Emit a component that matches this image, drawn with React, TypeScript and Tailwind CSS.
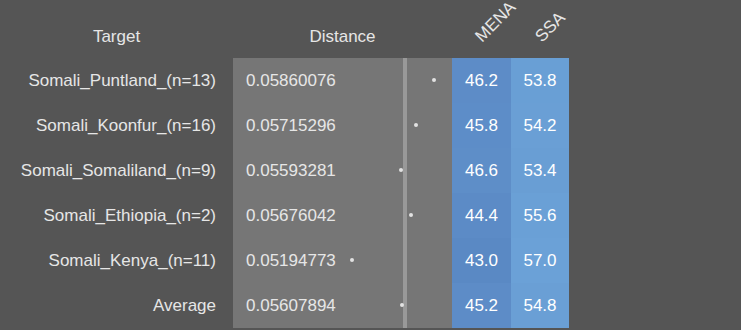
import React from "react";

const rows = [
  { name: "Somali_Puntland_(n=13)", dist: "0.05860076", dot: 434, mena: "46.2", ssa: "53.8", mc: "bg-[#5d8cc7]", sc: "bg-[#699fd5]" },
  { name: "Somali_Koonfur_(n=16)", dist: "0.05715296", dot: 416, mena: "45.8", ssa: "54.2", mc: "bg-[#5d8dc8]", sc: "bg-[#6a9fd5]" },
  { name: "Somali_Somaliland_(n=9)", dist: "0.05593281", dot: 401, mena: "46.6", ssa: "53.4", mc: "bg-[#5e8ec8]", sc: "bg-[#699ed4]" },
  { name: "Somali_Ethiopia_(n=2)", dist: "0.05676042", dot: 411, mena: "44.4", ssa: "55.6", mc: "bg-[#5c8bc6]", sc: "bg-[#6aa0d6]" },
  { name: "Somali_Kenya_(n=11)", dist: "0.05194773", dot: 352, mena: "43.0", ssa: "57.0", mc: "bg-[#5a89c4]", sc: "bg-[#6ba1d7]" },
  { name: "Average", dist: "0.05607894", dot: 402, mena: "45.2", ssa: "54.8", mc: "bg-[#5d8cc7]", sc: "bg-[#6a9fd5]" },
];

export default function App() {
  return (
    <div
      className="w-[741px] h-[330px] bg-[#555555] text-[#e6e6e6] text-[17px] leading-none overflow-hidden"
      style={{ fontFamily: '"Liberation Sans", Arial, sans-serif' }}
    >
      <div className="flex h-[58px]">
        <div className="w-[233px] px-[17px] flex items-end justify-center pb-[13px]">Target</div>
        <div className="w-[219px] flex items-end justify-center pb-[13px]">Distance</div>
        <div className="w-[59px] relative">
          <span className="absolute left-[32px] bottom-[13px] origin-bottom-left -rotate-45 whitespace-nowrap">MENA</span>
        </div>
        <div className="w-[58px] relative">
          <span className="absolute left-[33px] bottom-[13px] origin-bottom-left -rotate-45 whitespace-nowrap">SSA</span>
        </div>
      </div>
      {rows.map((r) => (
        <div key={r.name} className="flex h-[45px]">
          <div className="w-[233px] pr-[17px] flex items-center justify-end">{r.name}</div>
          <div className="w-[219px] bg-[#767676] relative flex items-center pl-[13px]">
            <span>{r.dist}</span>
            <div className="absolute left-[170px] top-0 bottom-0 w-[4px] bg-[#999999]" />
            <div
              className="absolute top-[20px] w-[4px] h-[4px] rounded-full bg-[#e2e2e2]"
              style={{ left: r.dot - 233 - 2 }}
            />
          </div>
          <div className={`w-[59px] ${r.mc} text-white flex items-center justify-center`}>{r.mena}</div>
          <div className={`w-[58px] ${r.sc} text-white flex items-center justify-center`}>{r.ssa}</div>
        </div>
      ))}
    </div>
  );
}
